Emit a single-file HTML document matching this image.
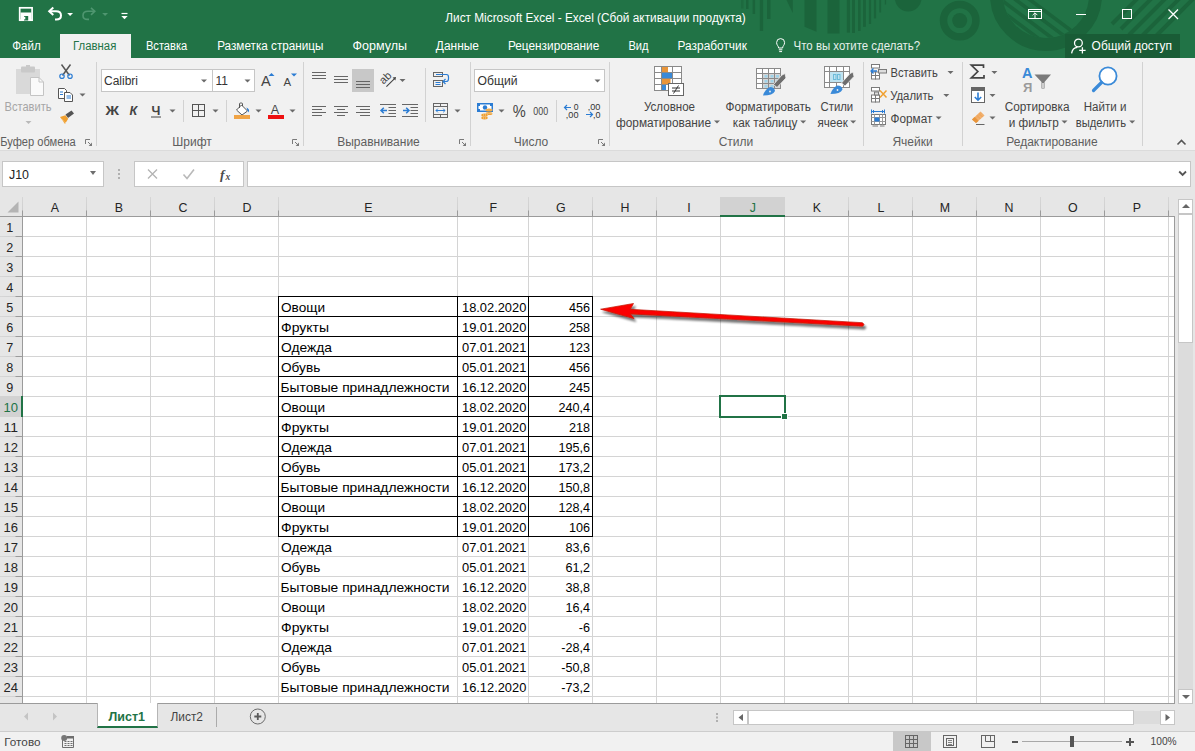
<!DOCTYPE html><html><head><meta charset="utf-8"><title>Excel</title><style>*{box-sizing:border-box;margin:0;padding:0}
html,body{width:1195px;height:751px;overflow:hidden;background:#fff;font-family:"Liberation Sans",sans-serif;font-size:12px;color:#444}
body{position:relative}
.abs{position:absolute}
/* title bar */
#title{position:absolute;left:0;top:0;width:1195px;height:58px;background:#217346;overflow:hidden}
#title .t{position:absolute;color:#fff;white-space:nowrap}
#tabhome{position:absolute;left:60px;top:34px;width:71px;height:24px;background:#f1f1f1;color:#217346;text-align:center;line-height:23px;font-size:12.5px}
.tab{position:absolute;top:34px;height:24px;line-height:23px;color:#fff;font-size:12.5px;white-space:nowrap}
/* ribbon */
#ribbon{position:absolute;left:0;top:58px;width:1195px;height:92px;background:#f1f1f1;overflow:hidden}
#ribbon .sep{position:absolute;width:1px;background:#d4d4d4;top:4px;height:83px}
#ribbon .gl{position:absolute;top:77px;font-size:12px;color:#5c5c5c;white-space:nowrap;transform:translateX(-50%);line-height:14px}
#ribbon .tx{position:absolute;font-size:12px;color:#444;white-space:nowrap;line-height:14px}
#ribbon .txc{position:absolute;font-size:12px;color:#444;white-space:nowrap;line-height:14px;transform:translateX(-50%)}
.dd{position:absolute;width:0;height:0;border-left:3px solid transparent;border-right:3px solid transparent;border-top:3px solid #666}
.dl{position:absolute;top:81px;width:8px;height:8px}
/* formula bar */
#fbar{position:absolute;left:0;top:150px;width:1195px;height:47px;background:#e6e6e6}
/* grid */
#grid{position:absolute;left:0;top:0;width:1195px;height:704px;overflow:hidden}
#colhdr{position:absolute;left:0;top:197px;width:1175px;height:20px;background:#e6e6e6;border-bottom:1px solid #9b9b9b}
#rowhdr{position:absolute;left:0;top:217px;width:23px;height:486px;background:#e6e6e6;border-right:1px solid #9b9b9b}
.vl{position:absolute;top:217px;width:1px;height:486px;background:#d4d4d4}
.hl{position:absolute;left:23px;width:1151px;height:1px;background:#d4d4d4}
.ct{position:absolute;top:197px;width:1px;height:19px;background:linear-gradient(#d6d6d6 0,#d0d0d0 13px,#9b9b9b 14px)}
.rt{position:absolute;left:0;width:22px;height:1px;background:linear-gradient(90deg,#d6d6d6 0,#d0d0d0 15px,#9b9b9b 16px)}
.bh{position:absolute;left:278px;width:315px;height:1px;background:#000}
.bv{position:absolute;width:1px;background:#000}
#selbox{position:absolute;left:719px;top:395px;width:67px;height:23px;border:2px solid #217346}
#selhandle{position:absolute;left:781px;top:413px;width:7px;height:7px;background:#217346;border:1px solid #fff}
</style></head><body>
<div id="title">
<svg class="abs" style="left:740px;top:0" width="455" height="58" viewBox="740 0 455 58">
<defs><clipPath id="cpin"><circle cx="1046" cy="-5" r="43"/></clipPath></defs>
<g fill="#1b643b" stroke="none">
<rect x="741" y="0" width="2.500" height="8.500" opacity="0.600"/><rect x="746" y="0" width="2.500" height="9"/><rect x="752.600" y="0" width="2.500" height="14"/><rect x="759.800" y="0" width="3.300" height="31"/><rect x="767" y="0" width="3.500" height="19"/>
<path d="M786.500 0 H792.800 V13 Z"/>
<path d="M804.500 0 H816.500 V31.800 L804.500 26.800 Z"/><rect x="827.500" y="0" width="12" height="33.500"/>
<rect x="846.800" y="0" width="3.200" height="32.600"/><rect x="852" y="0" width="3" height="33"/><rect x="858" y="0" width="2.600" height="31"/><rect x="863" y="0" width="2.900" height="26.800"/><rect x="868.900" y="0" width="2.200" height="24"/><rect x="873.900" y="0" width="2.200" height="18.400"/><rect x="879.300" y="0" width="1.800" height="12.500"/><rect x="884.800" y="0" width="1.300" height="4.500"/>
<circle cx="908.200" cy="-2" r="13.400"/>
</g>
<circle cx="959.700" cy="20.600" r="16.200" fill="none" stroke="#1b643b" stroke-width="7.500"/>
<circle cx="959.700" cy="20.600" r="7.500" fill="#1b643b"/>
<circle cx="1046" cy="-5" r="49.500" fill="none" stroke="#1b643b" stroke-width="13"/>
<g stroke="#1b643b" stroke-width="3.600" fill="none" clip-path="url(#cpin)">
<path d="M995 6 L1062 56"/><path d="M1000 -1 L1068 50"/><path d="M1006 -7.500 L1075 44"/><path d="M1013 -13 L1081 38"/>
</g>
<g stroke="#1b643b" stroke-width="4" fill="none">
<path d="M1112 24 L1142 -6"/><path d="M1121 29 L1156 -6"/><path d="M1129 35 L1170 -6"/><path d="M1139 39 L1184 -6"/><path d="M1152 40 L1198 -6"/>
</g>
</svg>
<!-- quick access -->
<svg class="abs" style="left:14px;top:6px" width="120" height="18" viewBox="0 0 120 18" fill="none" stroke="#fff" stroke-width="1.3">
<rect x="5.700" y="1.800" width="12.400" height="12.400" stroke-width="1.700"/><rect x="6.500" y="6.500" width="11" height="7.500" fill="#fff" stroke="none"/><rect x="10" y="10" width="4.200" height="4.500" fill="#217346" stroke="none"/><rect x="10" y="10.800" width="1.300" height="2.600" fill="#fff" stroke="none"/>
<path d="M35.5 5.2 H42 Q47 5.2 47 9.4 Q47 13.4 42.4 13.4 H41" stroke-width="2"/><path d="M39.300 1.600 L35.200 5.300 L39.300 9" stroke-width="2"/>
<path d="M53.2 7 H59 L56.1 10 Z" fill="#fff" stroke="none"/>
<g stroke="#4f9670"><path d="M80.5 5.2 H74 Q69 5.2 69 9.4 Q69 13.4 73.6 13.4 H75" stroke-width="1.6"/><path d="M77 1.8 L80.8 5.3 L77 8.8" stroke-width="1.6"/></g>
<path d="M88.2 7 H94 L91.1 10 Z" fill="#4f9670" stroke="none"/>
<path d="M107.5 7.5 H113.5" stroke-width="1.2"/><path d="M107.3 10 H113.7 L110.5 13.2 Z" fill="#fff" stroke="none"/>
</svg>
<!-- window controls -->
<svg class="abs" style="left:1020px;top:4px" width="170" height="22" viewBox="1020 4 170 22" fill="none" stroke="#fff" stroke-width="1">
<rect x="1028.5" y="9.5" width="13" height="9"/><path d="M1028.5 11.5 H1041.5"/><path d="M1035 18 V13"/><path d="M1032.6 15.2 L1035 12.8 L1037.4 15.2"/>
<path d="M1076 14.5 H1086"/>
<rect x="1122.5" y="9.5" width="9" height="9"/>
<path d="M1168.500 9.500 L1178 19 M1178 9.500 L1168.500 19" stroke-width="1.250"/>
</svg>
<!-- tabs -->
<div id="tabhome"></div>
<svg class="abs" style="left:774px;top:37px" width="14" height="18" viewBox="0 0 14 18" fill="none" stroke="#fff" stroke-width="1"><path d="M4.6 11 C4.6 9 2.6 8.2 2.6 5.6 A4 4 0 0 1 10.600000000000001 5.6 C10.6 8.2 8.6 9 8.6 11 Z"/><path d="M4.8 12.8 H8.4 M5.2 14.6 H8"/></svg>
<div class="abs" style="left:1065px;top:34px;width:115px;height:24px;background:#195c36"></div>
<svg class="abs" style="left:1070px;top:37px" width="18" height="18" viewBox="0 0 18 18" fill="none" stroke="#fff" stroke-width="1.3"><circle cx="8.4" cy="6" r="3.9"/><path d="M1.6 16.4 C2.2 12.4 4.6 10.6 7.4 10.4"/><path d="M12.4 10.2 V16.6 M9.2 13.4 H15.6"/></svg>
<svg class="abs" style="left:0;top:0" width="1195" height="58" viewBox="0 0 1195 58" font-family="Liberation Sans, sans-serif" font-size="12.5" fill="#fff">
<text x="445.300" y="22" textLength="300.500" lengthAdjust="spacingAndGlyphs" font-size="12.300">Лист Microsoft Excel - Excel (Сбой активации продукта)</text>
<text x="12.300" y="50" textLength="28.500" lengthAdjust="spacingAndGlyphs">Файл</text>
<text x="73.100" y="50" textLength="43.200" lengthAdjust="spacingAndGlyphs" fill="#217346">Главная</text>
<text x="145.900" y="50" textLength="41.400" lengthAdjust="spacingAndGlyphs">Вставка</text>
<text x="217.200" y="50" textLength="106.200" lengthAdjust="spacingAndGlyphs">Разметка страницы</text>
<text x="352.500" y="50" textLength="54.500" lengthAdjust="spacingAndGlyphs">Формулы</text>
<text x="435.800" y="50" textLength="43.200" lengthAdjust="spacingAndGlyphs">Данные</text>
<text x="507.900" y="50" textLength="91.400" lengthAdjust="spacingAndGlyphs">Рецензирование</text>
<text x="628.400" y="50" textLength="20.100" lengthAdjust="spacingAndGlyphs">Вид</text>
<text x="677.600" y="50" textLength="69.300" lengthAdjust="spacingAndGlyphs">Разработчик</text>
<text x="793.600" y="50" textLength="126.500" lengthAdjust="spacingAndGlyphs" fill="#e6f0ea">Что вы хотите сделать?</text>
<text x="1091.600" y="50" textLength="80.300" lengthAdjust="spacingAndGlyphs">Общий доступ</text>
</svg>
</div>

<div id="ribbon"></div>
<svg id="rsvg" class="abs" style="left:0;top:58px" width="1195" height="92" viewBox="0 58 1195 92" font-family="Liberation Sans, sans-serif" font-size="12" fill="#444">
<defs>
<path id="dd" d="M0 0 H6 L3 3 Z" fill="#6a6a6a"/>
<g id="dl" fill="none" stroke="#7a7a7a" stroke-width="1"><path d="M0.5 5 V0.5 H5"/><path d="M3 3 L6.5 6.5"/><path d="M7 3.6 V7 H3.6 Z" fill="#7a7a7a" stroke="none"/></g>
</defs>
<!-- group separators -->
<g stroke="#d2d2d2" stroke-width="1">
<path d="M96.5 62 V146"/><path d="M303.5 62 V146"/><path d="M470.5 62 V146"/><path d="M609.5 62 V146"/><path d="M863.5 62 V146"/><path d="M962.5 62 V146"/><path d="M1142.5 62 V146"/>
<path d="M183.5 100 V122"/><path d="M226.5 100 V122"/><path d="M425.5 68 V122"/><path d="M556.5 100 V122"/>
</g>
<!-- group labels -->
<g fill="#5e5e5e" font-size="12" text-anchor="middle">
<text x="38" y="146" textLength="75.500" lengthAdjust="spacingAndGlyphs">Буфер обмена</text>
<text x="192" y="146">Шрифт</text>
<text x="378.5" y="146">Выравнивание</text>
<text x="531" y="146">Число</text>
<text x="736" y="146">Стили</text>
<text x="912.5" y="146">Ячейки</text>
<text x="1052" y="146">Редактирование</text>
</g>
<use href="#dl" x="85" y="139"/><use href="#dl" x="292" y="139"/><use href="#dl" x="459" y="139"/><use href="#dl" x="598" y="139"/>
<path d="M1177.5 144.5 L1181.5 140.5 L1185.5 144.5" fill="none" stroke="#555" stroke-width="1.6"/>

<!-- ===== CLIPBOARD ===== -->
<g id="g-clip">
<rect x="16" y="69" width="24" height="25" fill="#d9d9d9"/>
<rect x="21" y="66.5" width="14" height="6" rx="1" fill="#c9c9c9"/><rect x="26" y="65" width="4" height="3" fill="#c9c9c9"/>
<path d="M30.5 77.5 H39 L43.5 82 V95.5 H30.5 Z" fill="#fafafa" stroke="#c4c4c4"/><path d="M39 77.5 V82 H43.5" fill="none" stroke="#c4c4c4"/>
<text x="28" y="111" text-anchor="middle" fill="#a6a6a6" font-size="13" textLength="47" lengthAdjust="spacingAndGlyphs">Вставить</text>
<path d="M25.5 121 H31.5 L28.5 124 Z" fill="#b9b9b9"/>
<!-- scissors -->
<g fill="none"><path d="M61.5 64.5 L69.5 75.5 M70.5 64.5 L62.5 75.5" stroke="#555" stroke-width="1.5"/><circle cx="62" cy="76.2" r="2.2" stroke="#2b7cd3" stroke-width="1.2"/><circle cx="70" cy="76.2" r="2.2" stroke="#2b7cd3" stroke-width="1.2"/></g>
<!-- copy -->
<g fill="#fff" stroke="#555" stroke-width="1"><path d="M58.5 88.500 H64.5 L66.500 90.500 V98.500 H58.500 Z"/><path d="M64.500 92.500 H70 L72.500 95 V101.500 H64.500 Z"/></g>
<g stroke="#2b7cd3" stroke-width="1"><path d="M60 92 H63 M60 94.500 H63 M66.5 96 H71 M66.5 98 H71"/></g>
<use href="#dd" x="79.500" y="93.500"/>
<!-- format painter -->
<g><path d="M65.5 114.5 L71.5 110.500 L74 113.500 L68 118 Z" fill="#555"/><path d="M60 117 L65.5 115.200 L68.200 118.800 L65 124 Z" fill="#f0a030"/><path d="M59 117 L66.5 123.500" stroke="#fff" stroke-width="0.6" stroke-dasharray="1 1"/></g>
</g>

<!-- ===== FONT ===== -->
<g id="g-font">
<rect x="101.5" y="69.500" width="153" height="22" fill="#fff" stroke="#c6c6c6"/><path d="M212.500 69.500 V91.500" stroke="#c6c6c6"/>
<text x="104" y="85" fill="#333" textLength="34" lengthAdjust="spacingAndGlyphs">Calibri</text>
<use href="#dd" x="201" y="79.500"/>
<text x="215.500" y="85" fill="#333">11</text>
<use href="#dd" x="244.500" y="79.500"/>
<text x="261" y="86.200" font-size="14.600" fill="#444">A</text><path d="M268.500 76 H274.500 L271.500 73 Z" fill="#2b7cd3"/>
<text x="283.600" y="86.200" font-size="11.400" fill="#444">A</text><path d="M291 73.500 H297 L294 76.500 Z" fill="#2b7cd3"/>
<text x="105.500" y="115" font-size="12.600" font-weight="bold" fill="#444" textLength="13.500" lengthAdjust="spacingAndGlyphs">Ж</text>
<text x="129.500" y="115" font-size="12.600" font-weight="bold" font-style="italic" fill="#444">К</text>
<text x="151.500" y="115" font-size="12.600" fill="#444" font-weight="bold">Ч</text><path d="M151 117 H161" stroke="#444" stroke-width="1"/>
<use href="#dd" x="169.500" y="109.500"/>
<g fill="none" stroke="#555" stroke-width="1"><rect x="192.500" y="104.500" width="12" height="12"/><path d="M198.500 104.500 V116.500 M192.500 110.500 H204.500"/></g>
<use href="#dd" x="212.500" y="109.500"/>
<!-- fill bucket -->
<g fill="none" stroke="#555" stroke-width="1"><path d="M241.500 105 L247.500 111 L242 115 L236.500 110 Z" fill="#fff"/><path d="M239.500 108 V104 Q239.500 103 240.500 103 H241.500 Q242.500 103 242.500 104 V106"/></g><path d="M246.500 107.500 Q250 109 248.800 112.500 Q247 110.500 246.500 107.500 Z" fill="#2b7cd3"/>
<rect x="234" y="115" width="16" height="4" fill="#f0a446"/>
<use href="#dd" x="255.500" y="109.500"/>
<text x="270.700" y="114" font-size="12.600" fill="#444">A</text><rect x="268" y="115" width="16" height="4" fill="#ee1111"/>
<use href="#dd" x="289.500" y="109.500"/>
</g>
<!-- ===== ALIGNMENT ===== -->
<g id="g-align">
<rect x="352" y="69" width="22" height="23" fill="#c8c8c8"/>
<g stroke="#666" stroke-width="1" fill="none">
<path d="M312 72.500 H326 M312 75.500 H326 M312 78.500 H326"/>
<path d="M334 76.500 H348 M334 79.500 H348 M334 82.500 H348"/>
<path d="M356 81.500 H370 M356 84.500 H370 M356 87.500 H370"/>
<path d="M312 106.500 H326 M312 109.500 H322 M312 112.500 H326 M312 115.500 H322"/>
<path d="M334 106.500 H348 M337 109.500 H345 M334 112.500 H348 M337 115.500 H345"/>
<path d="M356 106.500 H370 M360 109.500 H370 M356 112.500 H370 M360 115.500 H370"/>
<path d="M380 104.500 H396 M388.500 107.500 H396 M388.500 110.500 H396 M388.500 113.500 H396 M380 116.500 H396"/>
<path d="M402 104.500 H418 M410.500 107.500 H418 M410.500 110.500 H418 M410.500 113.500 H418 M402 116.500 H418"/>
</g>
<g stroke="#2b7cd3" stroke-width="1.500" fill="none"><path d="M381 110.500 H387 M383.800 107.700 L381 110.500 L383.800 113.300"/><path d="M403 110.500 H409 M406.200 107.700 L409 110.500 L406.200 113.300"/></g>
<!-- orientation -->
<g><text transform="translate(383.600 84.800) rotate(-45)" font-size="11" fill="#444">ab</text><path d="M386.400 86.700 L394.800 78.300" stroke="#444" stroke-width="1.100" fill="none"/><path d="M396 77 L392.600 77.600 L395.400 80.400 Z" fill="#444"/></g>
<use href="#dd" x="399.500" y="79"/>
<!-- wrap -->
<g fill="none" stroke="#666" stroke-width="1"><rect x="433.500" y="72.500" width="9" height="4"/><rect x="433.500" y="80.500" width="9" height="6"/></g>
<g fill="none" stroke="#2b7cd3" stroke-width="1.200"><path d="M436 74.500 H446.500 Q448.500 74.500 448.500 77 V79 Q448.500 81.500 446 81.500 H443.500"/><path d="M445.500 79 L443 81.500 L445.500 84"/><path d="M435.500 82.500 H440.500 M435.500 84.500 H440.500" stroke-width="1"/></g>
<!-- merge -->
<g fill="none" stroke="#666" stroke-width="1"><rect x="433.500" y="103.500" width="14" height="14"/><path d="M433.500 106.500 H447.500 M433.500 114.500 H447.500 M440.500 103.500 V106.500 M440.500 114.500 V117.500"/></g>
<g fill="none" stroke="#2b7cd3" stroke-width="1"><path d="M436 110.500 H445"/><path d="M437.800 108.700 L436 110.500 L437.800 112.300 M443.200 108.700 L445 110.500 L443.200 112.300"/></g>
<use href="#dd" x="454.500" y="109.500"/>
</g>
<!-- ===== NUMBER ===== -->
<g id="g-num">
<rect x="474.500" y="69.500" width="130" height="22" fill="#fff" stroke="#c6c6c6"/>
<text x="477.500" y="85" fill="#333" font-size="12.500" textLength="40" lengthAdjust="spacingAndGlyphs">Общий</text>
<use href="#dd" x="594.500" y="79.500"/>
<!-- currency -->
<rect x="477" y="103" width="16" height="9" fill="#2b7cd3"/><rect x="478.500" y="104.500" width="13" height="6" fill="#fff"/><circle cx="485" cy="107.500" r="2.200" fill="#2b7cd3"/><rect x="478" y="104" width="2" height="2" fill="#2b7cd3"/><rect x="490" y="104" width="2" height="2" fill="#2b7cd3"/><rect x="478" y="109" width="2" height="2" fill="#2b7cd3"/>
<g fill="#f0a030"><ellipse cx="489" cy="110" rx="3.500" ry="1.600"/><ellipse cx="489" cy="113.500" rx="3.500" ry="1.600"/><ellipse cx="484.500" cy="115" rx="3.500" ry="1.600"/><ellipse cx="484.500" cy="118" rx="3.500" ry="1.400"/></g>
<g stroke="#f1f1f1" stroke-width="0.600"><path d="M485.500 110 H492.500 M485.500 113.500 H492.500 M481 115 H488 M481 118 H488" stroke-dasharray="1 1"/></g>
<use href="#dd" x="498.500" y="109.500"/>
<text x="512.800" y="117.200" font-size="16" fill="#444" textLength="13" lengthAdjust="spacingAndGlyphs">%</text>
<text x="533.300" y="114.500" font-size="10.400" fill="#444" textLength="14.800" lengthAdjust="spacingAndGlyphs">000</text>
<!-- dec icons -->
<g font-size="8.800" fill="#333">
<text x="573.800" y="109.900" textLength="4.800" lengthAdjust="spacingAndGlyphs">0</text><text x="565.800" y="118.200" textLength="12.700" lengthAdjust="spacingAndGlyphs">,00</text>
<text x="587.700" y="109.900" textLength="12.700" lengthAdjust="spacingAndGlyphs">,00</text><text x="593" y="118.200" textLength="7.500" lengthAdjust="spacingAndGlyphs">,0</text>
</g>
<g stroke="#2b7cd3" stroke-width="1.200" fill="none"><path d="M564.500 107.500 H571 M567 105 L564.500 107.500 L567 110"/><path d="M586 114.500 H592.500 M590 112 L592.500 114.500 L590 117"/></g>
</g>

<!-- ===== STYLES ===== -->
<g id="g-styles">
<!-- conditional formatting -->
<rect x="654.500" y="66.500" width="27" height="24" fill="#fff" stroke="#8a8a8a"/>
<rect x="662" y="67" width="6" height="5.500" fill="#e8953a"/><rect x="662" y="73" width="10.500" height="5" fill="#3a8ad8"/><rect x="662" y="79" width="8.500" height="5.500" fill="#e8953a"/><rect x="662" y="85" width="4" height="5" fill="#3a8ad8"/>
<g stroke="#8a8a8a" stroke-width="1" fill="none"><path d="M654.500 72.500 H681.500 M654.500 78.500 H681.500 M654.500 84.500 H681.500 M661.500 66.500 V90.500 M672.500 66.500 V90.500"/></g>
<rect x="668.500" y="83.500" width="15" height="12" fill="#fff" stroke="#666"/>
<g stroke="#333" stroke-width="1" fill="none"><path d="M672 88 H680 M672 91 H680 M678.500 85.500 L673.500 93.500"/></g>
<text x="669.500" y="111" text-anchor="middle" textLength="51" lengthAdjust="spacingAndGlyphs">Условное</text>
<text x="616" y="126.500" textLength="95" lengthAdjust="spacingAndGlyphs">форматирование</text>
<use href="#dd" x="714" y="120.500"/>
<!-- format as table -->
<rect x="756.500" y="68.500" width="24" height="20" fill="#fff" stroke="#8a8a8a"/>
<rect x="763" y="74" width="17" height="14" fill="#d6d6d6"/>
<g fill="#9fd3ea"><rect x="764.500" y="75" width="3" height="2.500"/><rect x="770.500" y="75" width="3" height="2.500"/><rect x="776" y="75" width="3" height="2.500"/><rect x="764.500" y="80" width="3" height="2.500"/><rect x="770.500" y="80" width="3" height="2.500"/><rect x="776" y="80" width="3" height="2.500"/><rect x="764.500" y="85" width="3" height="2.500"/><rect x="770.500" y="85" width="3" height="2.500"/></g>
<g stroke="#8a8a8a" stroke-width="1" fill="none"><path d="M756.500 73.500 H780.500 M756.500 78.500 H780.500 M756.500 83.500 H780.500 M762.500 68.500 V88.500 M768.500 68.500 V88.500 M774.500 68.500 V88.500"/></g>
<path d="M785 73.500 L786 78 L777 87.500 L773.500 84.500 L782 75 Z" fill="#6e6e6e" stroke="#f1f1f1" stroke-width="0.800"/>
<path d="M763 95.500 Q765 89 770 87 Q774.500 87 775 91 Q773 95.500 763 95.500 Z" fill="#3a8ad8"/><circle cx="770" cy="91.500" r="0.900" fill="#f1f1f1"/>
<text x="725.500" y="111" textLength="85.500" lengthAdjust="spacingAndGlyphs">Форматировать</text>
<text x="732.800" y="126.500" textLength="64.500" lengthAdjust="spacingAndGlyphs">как таблицу</text>
<use href="#dd" x="800.200" y="120.500"/>
<!-- cell styles -->
<rect x="824.500" y="66.500" width="25" height="21" fill="#fff" stroke="#8a8a8a"/>
<g stroke="#8a8a8a" stroke-width="1" fill="none"><path d="M824.500 71.500 H849.500 M824.500 82.500 H849.500 M829.500 66.500 V87.500 M843.500 66.500 V87.500 M836.500 66.500 V71.500 M836.500 82.500 V87.500"/></g>
<rect x="830" y="72" width="13" height="10" fill="#bfe3f1"/><g stroke="#6dbbd9" stroke-width="1" fill="none"><rect x="833.500" y="74.500" width="2.500" height="5"/><rect x="837.500" y="74.500" width="2.500" height="5"/></g>
<path d="M853 72 L854 76.500 L845 86 L841.500 83 L850 73.500 Z" fill="#6e6e6e" stroke="#f1f1f1" stroke-width="0.800"/>
<path d="M830.500 94 Q832.500 87.500 837.500 85.500 Q842 85.500 842.500 89.500 Q840.500 94 830.500 94 Z" fill="#3a8ad8"/><circle cx="837.500" cy="90" r="0.900" fill="#f1f1f1"/>
<text x="820.500" y="111" textLength="32.700" lengthAdjust="spacingAndGlyphs">Стили</text>
<text x="817.400" y="126.500" textLength="30.400" lengthAdjust="spacingAndGlyphs">ячеек</text>
<use href="#dd" x="850.200" y="120.500"/>
</g>
<!-- ===== CELLS ===== -->
<g id="g-cells">
<!-- insert -->
<g fill="#fff" stroke="#7a7a7a" stroke-width="1"><rect x="871.500" y="64.500" width="8" height="3.500"/><rect x="871.500" y="75.500" width="4" height="3.500"/><rect x="875.500" y="75.500" width="4" height="3.500"/><rect x="871.500" y="72" width="4" height="3.500"/><rect x="875.500" y="72" width="4" height="3.500"/><rect x="878.500" y="69.500" width="8" height="3.500" fill="#ddd"/></g>
<g stroke="#2b7cd3" stroke-width="1.300" fill="none"><path d="M871 71 H877 M873.500 68.500 L871 71 L873.500 73.500"/></g>
<text x="890.500" y="76.700" textLength="47.300" lengthAdjust="spacingAndGlyphs">Вставить</text>
<use href="#dd" x="947.500" y="71"/>
<!-- delete -->
<g fill="#fff" stroke="#7a7a7a" stroke-width="1"><rect x="871.500" y="87.500" width="8" height="3.500"/><rect x="871.500" y="98.500" width="4" height="3.500"/><rect x="875.500" y="98.500" width="4" height="3.500"/><rect x="871.500" y="95" width="4" height="3.500"/><rect x="875.500" y="95" width="4" height="3.500"/><rect x="874.500" y="92" width="4" height="3" fill="#ddd"/></g>
<g stroke="#f0a030" stroke-width="1.500" fill="none"><path d="M880 90.500 L886.500 97.500 M886.500 90.500 L880 97.500"/></g>
<text x="890.200" y="99.800" textLength="43.300" lengthAdjust="spacingAndGlyphs">Удалить</text>
<use href="#dd" x="943.300" y="94"/>
<!-- format -->
<g stroke="#2b7cd3" stroke-width="1" fill="none"><path d="M871.500 109.500 V113.500 M884.500 109.500 V113.500 M872 111.500 H884 M874 110 L872.500 111.500 L874 113 M882 110 L883.500 111.500 L882 113"/></g>
<rect x="871.500" y="114.500" width="14" height="10" fill="#fff" stroke="#7a7a7a"/><g stroke="#9a9a9a" stroke-width="1" fill="none"><path d="M871.500 117.500 H885.500 M871.500 121.500 H885.500 M874.500 114.500 V124.500 M879.500 114.500 V124.500 M882.500 114.500 V124.500"/><path d="M872.500 126 H878 M880 126 H884.500" stroke="#7a7a7a"/></g>
<rect x="874.500" y="117.500" width="5" height="4" fill="#2b7cd3"/>
<text x="890.600" y="122.500" textLength="41.700" lengthAdjust="spacingAndGlyphs">Формат</text>
<use href="#dd" x="935.600" y="116.500"/>
</g>
<!-- ===== EDITING ===== -->
<g id="g-edit">
<path d="M983.500 68 V65.200 H971.300 L977.800 71.500 L971.300 77.800 H984 V75" fill="none" stroke="#444" stroke-width="1.700"/>
<use href="#dd" x="991.400" y="71"/>
<rect x="971.500" y="87.500" width="13" height="15" fill="#fff" stroke="#666"/><rect x="971" y="87" width="14" height="4" fill="#666"/>
<g stroke="#2b7cd3" stroke-width="1.600" fill="none"><path d="M978 92.500 V100 M974.800 97 L978 100.200 L981.200 97"/></g>
<use href="#dd" x="989.500" y="94"/>
<path d="M972 119.500 L980.500 111.500 L984.500 115.500 L976 123 Z" fill="#f0a860"/><path d="M972 119.500 L974.500 117 L978.500 121 L976 123 Z" fill="#e8953a"/><path d="M976 124.500 H984.500" stroke="#666" stroke-width="1"/>
<g stroke="#f7d2a8" stroke-width="0.700" stroke-dasharray="1 1"><path d="M976 116.500 L980 120.500 M978 114.500 L982 118.500 M980 112.500 L984 116.500"/></g>
<use href="#dd" x="989.500" y="116.500"/>
<!-- sort -->
<text x="1022" y="78" font-size="14.500" font-weight="bold" fill="#3a8ad8">А</text>
<text x="1023" y="92.300" font-size="13" font-weight="bold" fill="#9a9a9a">Я</text>
<path d="M1034.500 74.500 H1051 L1044.500 82 V88.500 H1041.500 V82 Z" fill="#7a7a7a"/><rect x="1042.300" y="83" width="1.400" height="5" fill="#f1f1f1"/>
<text x="1004.700" y="110.700" textLength="64.800" lengthAdjust="spacingAndGlyphs">Сортировка</text>
<text x="1008.700" y="126.500" textLength="50" lengthAdjust="spacingAndGlyphs">и фильтр</text>
<use href="#dd" x="1061.500" y="120.500"/>
<!-- find -->
<circle cx="1108" cy="76" r="8.600" fill="#fff" stroke="#3a8ad8" stroke-width="1.800"/>
<path d="M1101.500 82.500 L1093.500 90.500" stroke="#3a8ad8" stroke-width="3.200" stroke-linecap="round"/>
<text x="1083.700" y="110.700" textLength="42.700" lengthAdjust="spacingAndGlyphs">Найти и</text>
<text x="1075.800" y="126.500" textLength="50.200" lengthAdjust="spacingAndGlyphs">выделить</text>
<use href="#dd" x="1129.200" y="120.500"/>
</g>
</svg>

<div id="fbar"><div class="abs" style="left:0;top:0;width:1195px;height:1px;background:#dbdbdb"></div>
<div class="abs" style="left:2px;top:11px;width:102px;height:26px;background:#fff;border:1px solid #c6c6c6"></div>
<div class="abs" style="left:9px;top:18px;font-size:12.400px;color:#222;line-height:14px">J10</div>
<div class="dd" style="left:90px;top:21px;border-left-width:3.500px;border-right-width:3.500px;border-top-width:4px;border-top-color:#6e6e6e"></div>
<div class="abs" style="left:118px;top:19px;width:2px;height:2px;background:#b0b0b0;box-shadow:0 4px 0 #b0b0b0,0 8px 0 #b0b0b0"></div>
<div class="abs" style="left:134px;top:11px;width:110px;height:26px;background:#fff;border:1px solid #c6c6c6"></div>
<svg class="abs" style="left:134px;top:11px" width="110" height="26" viewBox="0 0 110 26" fill="none"><path d="M14 8.5 L23 17.5 M23 8.5 L14 17.5" stroke="#b3b3b3" stroke-width="1.3"/><path d="M49.5 13.5 L53 17.5 L60 8.5" stroke="#b9b9b9" stroke-width="1.6"/><text x="86" y="18" font-family="Liberation Serif" font-style="italic" font-weight="bold" font-size="13.500" fill="#4a4a4a" stroke="none">f</text><text x="91.500" y="18.500" font-family="Liberation Serif" font-style="italic" font-weight="bold" font-size="9.500" fill="#4a4a4a" stroke="none">x</text></svg>
<div class="abs" style="left:247px;top:11px;width:944px;height:26px;background:#fff;border:1px solid #c6c6c6"></div>
<svg class="abs" style="left:1176px;top:19px" width="12" height="10" viewBox="0 0 12 10" fill="none" stroke="#555" stroke-width="1.800"><path d="M3.200 2.500 L6.600 6 L10 2.500"/></svg>
</div>

<div id="grid">
<div id="colhdr"></div><div id="rowhdr"></div>
<div class="abs" style="left:720px;top:197px;width:65px;height:18px;background:#d2d2d2"></div><div class="abs" style="left:720px;top:215px;width:65px;height:2px;background:#217346"></div>
<div class="abs" style="left:0;top:396px;width:21px;height:21px;background:#d2d2d2"></div><div class="abs" style="left:21px;top:396px;width:2px;height:21px;background:#217346"></div>
<div class="vl" style="left:86px"></div>
<div class="vl" style="left:150px"></div>
<div class="vl" style="left:214px"></div>
<div class="vl" style="left:278px"></div>
<div class="vl" style="left:457px"></div>
<div class="vl" style="left:528px"></div>
<div class="vl" style="left:592px"></div>
<div class="vl" style="left:656px"></div>
<div class="vl" style="left:720px"></div>
<div class="vl" style="left:784px"></div>
<div class="vl" style="left:848px"></div>
<div class="vl" style="left:912px"></div>
<div class="vl" style="left:976px"></div>
<div class="vl" style="left:1040px"></div>
<div class="vl" style="left:1104px"></div>
<div class="vl" style="left:1168px"></div>
<div class="hl" style="top:236px"></div>
<div class="hl" style="top:256px"></div>
<div class="hl" style="top:276px"></div>
<div class="hl" style="top:296px"></div>
<div class="hl" style="top:316px"></div>
<div class="hl" style="top:336px"></div>
<div class="hl" style="top:356px"></div>
<div class="hl" style="top:376px"></div>
<div class="hl" style="top:396px"></div>
<div class="hl" style="top:416px"></div>
<div class="hl" style="top:436px"></div>
<div class="hl" style="top:456px"></div>
<div class="hl" style="top:476px"></div>
<div class="hl" style="top:496px"></div>
<div class="hl" style="top:516px"></div>
<div class="hl" style="top:536px"></div>
<div class="hl" style="top:556px"></div>
<div class="hl" style="top:576px"></div>
<div class="hl" style="top:596px"></div>
<div class="hl" style="top:616px"></div>
<div class="hl" style="top:636px"></div>
<div class="hl" style="top:656px"></div>
<div class="hl" style="top:676px"></div>
<div class="hl" style="top:696px"></div>
<div class="ct" style="left:22px"></div>
<div class="ct" style="left:86px"></div>
<div class="ct" style="left:150px"></div>
<div class="ct" style="left:214px"></div>
<div class="ct" style="left:278px"></div>
<div class="ct" style="left:457px"></div>
<div class="ct" style="left:528px"></div>
<div class="ct" style="left:592px"></div>
<div class="ct" style="left:656px"></div>
<div class="ct" style="left:848px"></div>
<div class="ct" style="left:912px"></div>
<div class="ct" style="left:976px"></div>
<div class="ct" style="left:1040px"></div>
<div class="ct" style="left:1104px"></div>
<div class="ct" style="left:1168px"></div>
<div class="rt" style="top:236px"></div>
<div class="rt" style="top:256px"></div>
<div class="rt" style="top:276px"></div>
<div class="rt" style="top:296px"></div>
<div class="rt" style="top:316px"></div>
<div class="rt" style="top:336px"></div>
<div class="rt" style="top:356px"></div>
<div class="rt" style="top:376px"></div>
<div class="rt" style="top:436px"></div>
<div class="rt" style="top:456px"></div>
<div class="rt" style="top:476px"></div>
<div class="rt" style="top:496px"></div>
<div class="rt" style="top:516px"></div>
<div class="rt" style="top:536px"></div>
<div class="rt" style="top:556px"></div>
<div class="rt" style="top:576px"></div>
<div class="rt" style="top:596px"></div>
<div class="rt" style="top:616px"></div>
<div class="rt" style="top:636px"></div>
<div class="rt" style="top:656px"></div>
<div class="rt" style="top:676px"></div>
<div class="rt" style="top:696px"></div>
<div class="bh" style="top:296px"></div>
<div class="bh" style="top:316px"></div>
<div class="bh" style="top:336px"></div>
<div class="bh" style="top:356px"></div>
<div class="bh" style="top:376px"></div>
<div class="bh" style="top:396px"></div>
<div class="bh" style="top:416px"></div>
<div class="bh" style="top:436px"></div>
<div class="bh" style="top:456px"></div>
<div class="bh" style="top:476px"></div>
<div class="bh" style="top:496px"></div>
<div class="bh" style="top:516px"></div>
<div class="bh" style="top:536px"></div>
<div class="bv" style="left:278px;top:296px;height:241px"></div>
<div class="bv" style="left:457px;top:296px;height:241px"></div>
<div class="bv" style="left:528px;top:296px;height:241px"></div>
<div class="bv" style="left:592px;top:296px;height:241px"></div>
<svg class="abs" style="left:0;top:197px" width="1177" height="506" viewBox="0 197 1177 506" font-family="Liberation Sans, sans-serif" font-size="12.600" fill="#000">
<path d="M18.500 201.500 V212.500 H7.500 Z" fill="#b4b4b4"/>
<g fill="#242424" text-anchor="middle" font-size="12.400">
<text x="54.9" y="212">A</text>
<text x="118.9" y="212">B</text>
<text x="182.9" y="212">C</text>
<text x="246.9" y="212">D</text>
<text x="368.4" y="212">E</text>
<text x="493.4" y="212">F</text>
<text x="560.9" y="212">G</text>
<text x="624.9" y="212">H</text>
<text x="688.9" y="212">I</text>
<text x="752.9" y="212" fill="#217346">J</text>
<text x="816.9" y="212">K</text>
<text x="880.9" y="212">L</text>
<text x="944.9" y="212">M</text>
<text x="1008.9" y="212">N</text>
<text x="1072.9" y="212">O</text>
<text x="1136.9" y="212">P</text>
</g>
<g fill="#242424" text-anchor="middle" font-size="12.600">
<text x="9.7" y="232">1</text>
<text x="9.7" y="252">2</text>
<text x="9.7" y="272">3</text>
<text x="9.7" y="292">4</text>
<text x="9.7" y="312">5</text>
<text x="9.7" y="332">6</text>
<text x="9.7" y="352">7</text>
<text x="9.7" y="372">8</text>
<text x="9.7" y="392">9</text>
<text x="10.8" y="412" fill="#217346" textLength="14.500" lengthAdjust="spacingAndGlyphs">10</text>
<text x="10.8" y="432" textLength="14.500" lengthAdjust="spacingAndGlyphs">11</text>
<text x="10.8" y="452" textLength="14.500" lengthAdjust="spacingAndGlyphs">12</text>
<text x="10.8" y="472" textLength="14.500" lengthAdjust="spacingAndGlyphs">13</text>
<text x="10.8" y="492" textLength="14.500" lengthAdjust="spacingAndGlyphs">14</text>
<text x="10.8" y="512" textLength="14.500" lengthAdjust="spacingAndGlyphs">15</text>
<text x="10.8" y="532" textLength="14.500" lengthAdjust="spacingAndGlyphs">16</text>
<text x="10.8" y="552" textLength="14.500" lengthAdjust="spacingAndGlyphs">17</text>
<text x="10.8" y="572" textLength="14.500" lengthAdjust="spacingAndGlyphs">18</text>
<text x="10.8" y="592" textLength="14.500" lengthAdjust="spacingAndGlyphs">19</text>
<text x="10.8" y="612" textLength="14.500" lengthAdjust="spacingAndGlyphs">20</text>
<text x="10.8" y="632" textLength="14.500" lengthAdjust="spacingAndGlyphs">21</text>
<text x="10.8" y="652" textLength="14.500" lengthAdjust="spacingAndGlyphs">22</text>
<text x="10.8" y="672" textLength="14.500" lengthAdjust="spacingAndGlyphs">23</text>
<text x="10.8" y="692" textLength="14.500" lengthAdjust="spacingAndGlyphs">24</text>
<text x="10.8" y="712" textLength="14.500" lengthAdjust="spacingAndGlyphs">25</text>
</g>
<text x="281" y="312" textLength="44" lengthAdjust="spacingAndGlyphs">Овощи</text><text x="526.300" y="312" text-anchor="end" textLength="64.300" lengthAdjust="spacingAndGlyphs">18.02.2020</text><text x="590" y="312" text-anchor="end">456</text>
<text x="281" y="332" textLength="48" lengthAdjust="spacingAndGlyphs">Фрукты</text><text x="526.300" y="332" text-anchor="end" textLength="64.300" lengthAdjust="spacingAndGlyphs">19.01.2020</text><text x="590" y="332" text-anchor="end">258</text>
<text x="281" y="352" textLength="51" lengthAdjust="spacingAndGlyphs">Одежда</text><text x="526.300" y="352" text-anchor="end" textLength="64.300" lengthAdjust="spacingAndGlyphs">07.01.2021</text><text x="590" y="352" text-anchor="end">123</text>
<text x="281" y="372" textLength="39.3" lengthAdjust="spacingAndGlyphs">Обувь</text><text x="526.300" y="372" text-anchor="end" textLength="64.300" lengthAdjust="spacingAndGlyphs">05.01.2021</text><text x="590" y="372" text-anchor="end">456</text>
<text x="280.5" y="392" textLength="169" lengthAdjust="spacingAndGlyphs">Бытовые принадлежности</text><text x="526.300" y="392" text-anchor="end" textLength="64.300" lengthAdjust="spacingAndGlyphs">16.12.2020</text><text x="590" y="392" text-anchor="end">245</text>
<text x="281" y="412" textLength="44" lengthAdjust="spacingAndGlyphs">Овощи</text><text x="526.300" y="412" text-anchor="end" textLength="64.300" lengthAdjust="spacingAndGlyphs">18.02.2020</text><text x="590" y="412" text-anchor="end">240,4</text>
<text x="281" y="432" textLength="48" lengthAdjust="spacingAndGlyphs">Фрукты</text><text x="526.300" y="432" text-anchor="end" textLength="64.300" lengthAdjust="spacingAndGlyphs">19.01.2020</text><text x="590" y="432" text-anchor="end">218</text>
<text x="281" y="452" textLength="51" lengthAdjust="spacingAndGlyphs">Одежда</text><text x="526.300" y="452" text-anchor="end" textLength="64.300" lengthAdjust="spacingAndGlyphs">07.01.2021</text><text x="590" y="452" text-anchor="end">195,6</text>
<text x="281" y="472" textLength="39.3" lengthAdjust="spacingAndGlyphs">Обувь</text><text x="526.300" y="472" text-anchor="end" textLength="64.300" lengthAdjust="spacingAndGlyphs">05.01.2021</text><text x="590" y="472" text-anchor="end">173,2</text>
<text x="280.5" y="492" textLength="169" lengthAdjust="spacingAndGlyphs">Бытовые принадлежности</text><text x="526.300" y="492" text-anchor="end" textLength="64.300" lengthAdjust="spacingAndGlyphs">16.12.2020</text><text x="590" y="492" text-anchor="end">150,8</text>
<text x="281" y="512" textLength="44" lengthAdjust="spacingAndGlyphs">Овощи</text><text x="526.300" y="512" text-anchor="end" textLength="64.300" lengthAdjust="spacingAndGlyphs">18.02.2020</text><text x="590" y="512" text-anchor="end">128,4</text>
<text x="281" y="532" textLength="48" lengthAdjust="spacingAndGlyphs">Фрукты</text><text x="526.300" y="532" text-anchor="end" textLength="64.300" lengthAdjust="spacingAndGlyphs">19.01.2020</text><text x="590" y="532" text-anchor="end">106</text>
<text x="281" y="552" textLength="51" lengthAdjust="spacingAndGlyphs">Одежда</text><text x="526.300" y="552" text-anchor="end" textLength="64.300" lengthAdjust="spacingAndGlyphs">07.01.2021</text><text x="590" y="552" text-anchor="end">83,6</text>
<text x="281" y="572" textLength="39.3" lengthAdjust="spacingAndGlyphs">Обувь</text><text x="526.300" y="572" text-anchor="end" textLength="64.300" lengthAdjust="spacingAndGlyphs">05.01.2021</text><text x="590" y="572" text-anchor="end">61,2</text>
<text x="280.5" y="592" textLength="169" lengthAdjust="spacingAndGlyphs">Бытовые принадлежности</text><text x="526.300" y="592" text-anchor="end" textLength="64.300" lengthAdjust="spacingAndGlyphs">16.12.2020</text><text x="590" y="592" text-anchor="end">38,8</text>
<text x="281" y="612" textLength="44" lengthAdjust="spacingAndGlyphs">Овощи</text><text x="526.300" y="612" text-anchor="end" textLength="64.300" lengthAdjust="spacingAndGlyphs">18.02.2020</text><text x="590" y="612" text-anchor="end">16,4</text>
<text x="281" y="632" textLength="48" lengthAdjust="spacingAndGlyphs">Фрукты</text><text x="526.300" y="632" text-anchor="end" textLength="64.300" lengthAdjust="spacingAndGlyphs">19.01.2020</text><text x="590" y="632" text-anchor="end">-6</text>
<text x="281" y="652" textLength="51" lengthAdjust="spacingAndGlyphs">Одежда</text><text x="526.300" y="652" text-anchor="end" textLength="64.300" lengthAdjust="spacingAndGlyphs">07.01.2021</text><text x="590" y="652" text-anchor="end">-28,4</text>
<text x="281" y="672" textLength="39.3" lengthAdjust="spacingAndGlyphs">Обувь</text><text x="526.300" y="672" text-anchor="end" textLength="64.300" lengthAdjust="spacingAndGlyphs">05.01.2021</text><text x="590" y="672" text-anchor="end">-50,8</text>
<text x="280.5" y="692" textLength="169" lengthAdjust="spacingAndGlyphs">Бытовые принадлежности</text><text x="526.300" y="692" text-anchor="end" textLength="64.300" lengthAdjust="spacingAndGlyphs">16.12.2020</text><text x="590" y="692" text-anchor="end">-73,2</text>
</svg>
<div id="selbox"></div><div id="selhandle"></div>
<svg class="abs" style="left:590px;top:290px" width="290" height="50" viewBox="590 290 290 50">
<defs><filter id="sh" x="-5%" y="-30%" width="110%" height="170%"><feGaussianBlur in="SourceAlpha" stdDeviation="1.300"/><feOffset dx="2" dy="2.500"/><feComponentTransfer><feFuncA type="linear" slope="0.550"/></feComponentTransfer><feMerge><feMergeNode/><feMergeNode in="SourceGraphic"/></feMerge></filter></defs>
<path d="M600.600 309.200 L633.500 303.500 L630.300 309.300 L862.500 322.700 Q865.300 324.400 862.700 326.200 L630.500 313.900 L634 318.600 Z" fill="#fb0505" stroke="#c01208" stroke-width="0.700" stroke-linejoin="round" filter="url(#sh)"/>
</svg>

<div class="abs" style="left:1175px;top:197px;width:20px;height:507px;background:#e6e6e6"></div>
<div class="abs" style="left:1174px;top:216px;width:1px;height:488px;background:#9b9b9b"></div>
<div class="abs" style="left:1178px;top:214px;width:15px;height:476px;background:#dcdcdc"></div>
<div class="abs" style="left:1178px;top:199px;width:15px;height:15px;background:#fff;border:1px solid #c6c6c6"></div>
<div class="abs" style="left:1181.500px;top:204px;width:0;height:0;border-left:4px solid transparent;border-right:4px solid transparent;border-bottom:4.500px solid #666"></div>
<div class="abs" style="left:1178px;top:214px;width:15px;height:129px;background:#fff;border:1px solid #c6c6c6"></div>
<div class="abs" style="left:1178px;top:689px;width:15px;height:15px;background:#fff;border:1px solid #c6c6c6"></div>
<div class="abs" style="left:1181.500px;top:694.500px;width:0;height:0;border-left:4px solid transparent;border-right:4px solid transparent;border-top:4.500px solid #666"></div>

</div>
<div class="abs" id="tabsbar" style="left:0;top:704px;width:1195px;height:27px;background:#e6e6e6"></div>
<div class="abs" style="left:0;top:703px;width:1175px;height:1px;background:#9b9b9b"></div>
<div class="abs" style="left:97px;top:703px;width:61px;height:25px;background:#fff;border-left:1px solid #b5b5b5;border-right:1px solid #b5b5b5;border-bottom:2px solid #217346"></div>
<div class="abs" style="left:216px;top:707px;width:1px;height:20px;background:#ababab"></div>
<div class="abs" style="left:733px;top:710px;width:15px;height:15px;background:#fff;border:1px solid #c6c6c6"></div>
<div class="abs" style="left:748px;top:710px;width:386px;height:15px;background:#fff;border:1px solid #c6c6c6"></div>
<div class="abs" style="left:1134px;top:711px;width:26px;height:13px;background:#dcdcdc"></div>
<div class="abs" style="left:1160px;top:710px;width:15px;height:15px;background:#fff;border:1px solid #c6c6c6"></div>
<div class="abs" id="status" style="left:0;top:731px;width:1195px;height:20px;background:#f1f1f1;border-top:1px solid #cdcdcd"></div>
<div class="abs" style="left:893px;top:731px;width:38px;height:20px;background:#c8c8c8"></div>
<svg class="abs" style="left:0;top:703px" width="1195" height="48" viewBox="0 703 1195 48" font-family="Liberation Sans, sans-serif" font-size="12" fill="#444">
<path d="M28 712.500 V720.500 L24 716.500 Z" fill="#c4c4c4"/><path d="M53 712.500 V720.500 L57 716.500 Z" fill="#c4c4c4"/>
<text x="108.500" y="720.600" font-weight="bold" font-size="12.500" fill="#217346" textLength="36.500" lengthAdjust="spacingAndGlyphs">Лист1</text>
<text x="170.500" y="720.600" font-size="12.500" textLength="32.500" lengthAdjust="spacingAndGlyphs">Лист2</text>
<circle cx="257.800" cy="716.500" r="7.500" fill="none" stroke="#6a6a6a" stroke-width="1"/><path d="M254.300 716.500 H261.300 M257.800 713 V720" stroke="#5a5a5a" stroke-width="1.800"/>
<g fill="#b0b0b0"><rect x="716" y="713" width="2" height="2"/><rect x="716" y="716.500" width="2" height="2"/><rect x="716" y="720" width="2" height="2"/></g>
<path d="M743 714 V721 L738.500 717.500 Z" fill="#666"/><path d="M1165.500 714 V721 L1170 717.500 Z" fill="#666"/>
<text x="4.300" y="745.700" textLength="36.200" lengthAdjust="spacingAndGlyphs" font-size="11.500">Готово</text>
<!-- macro icon -->
<g><path d="M62.500 740 V747.500 H73.500 V737" fill="none" stroke="#6e6e6e" stroke-width="1"/><rect x="67" y="736" width="7" height="2.500" fill="#6e6e6e"/><circle cx="64.200" cy="738" r="3" fill="#777"/><g fill="#6e6e6e"><rect x="64.500" y="741" width="2" height="1"/><rect x="67.500" y="741" width="2" height="1"/><rect x="70.500" y="741" width="2" height="1"/><rect x="64.500" y="743" width="2" height="1"/><rect x="67.500" y="743" width="2" height="1"/><rect x="70.500" y="743" width="2" height="1"/><rect x="64.500" y="745" width="2" height="1"/><rect x="67.500" y="745" width="2" height="1"/><rect x="70.500" y="745" width="2" height="1"/></g></g>
<!-- view icons -->
<g fill="none" stroke="#666" stroke-width="1"><rect x="905.500" y="735.500" width="12" height="12"/><path d="M909.500 735.500 V747.500 M913.500 735.500 V747.500 M905.500 739.500 H917.500 M905.500 743.500 H917.500"/></g>
<g fill="none" stroke="#666" stroke-width="1"><rect x="943.500" y="735.500" width="13" height="12"/><rect x="946.500" y="738.500" width="7" height="7"/><path d="M948 740.500 H952 M948 742.500 H952 M948 744.500 H952" stroke-width="0.800"/></g>
<g fill="none" stroke="#666" stroke-width="1"><rect x="981.500" y="735.500" width="13" height="12"/><path d="M985.500 735.500 V741.500 H994.500 M990.500 735.500 V741.500" /></g>
<!-- zoom -->
<rect x="1012" y="741" width="6" height="2" fill="#555"/>
<rect x="1022" y="741" width="100" height="1" fill="#a8a8a8"/>
<rect x="1070" y="736" width="4" height="11" fill="#555"/>
<rect x="1126" y="741" width="8" height="2" fill="#555"/><rect x="1129" y="738" width="2" height="8" fill="#555"/>
<text x="1150.600" y="745" textLength="26" lengthAdjust="spacingAndGlyphs" font-size="11.500">100%</text>
</svg>

</body></html>
